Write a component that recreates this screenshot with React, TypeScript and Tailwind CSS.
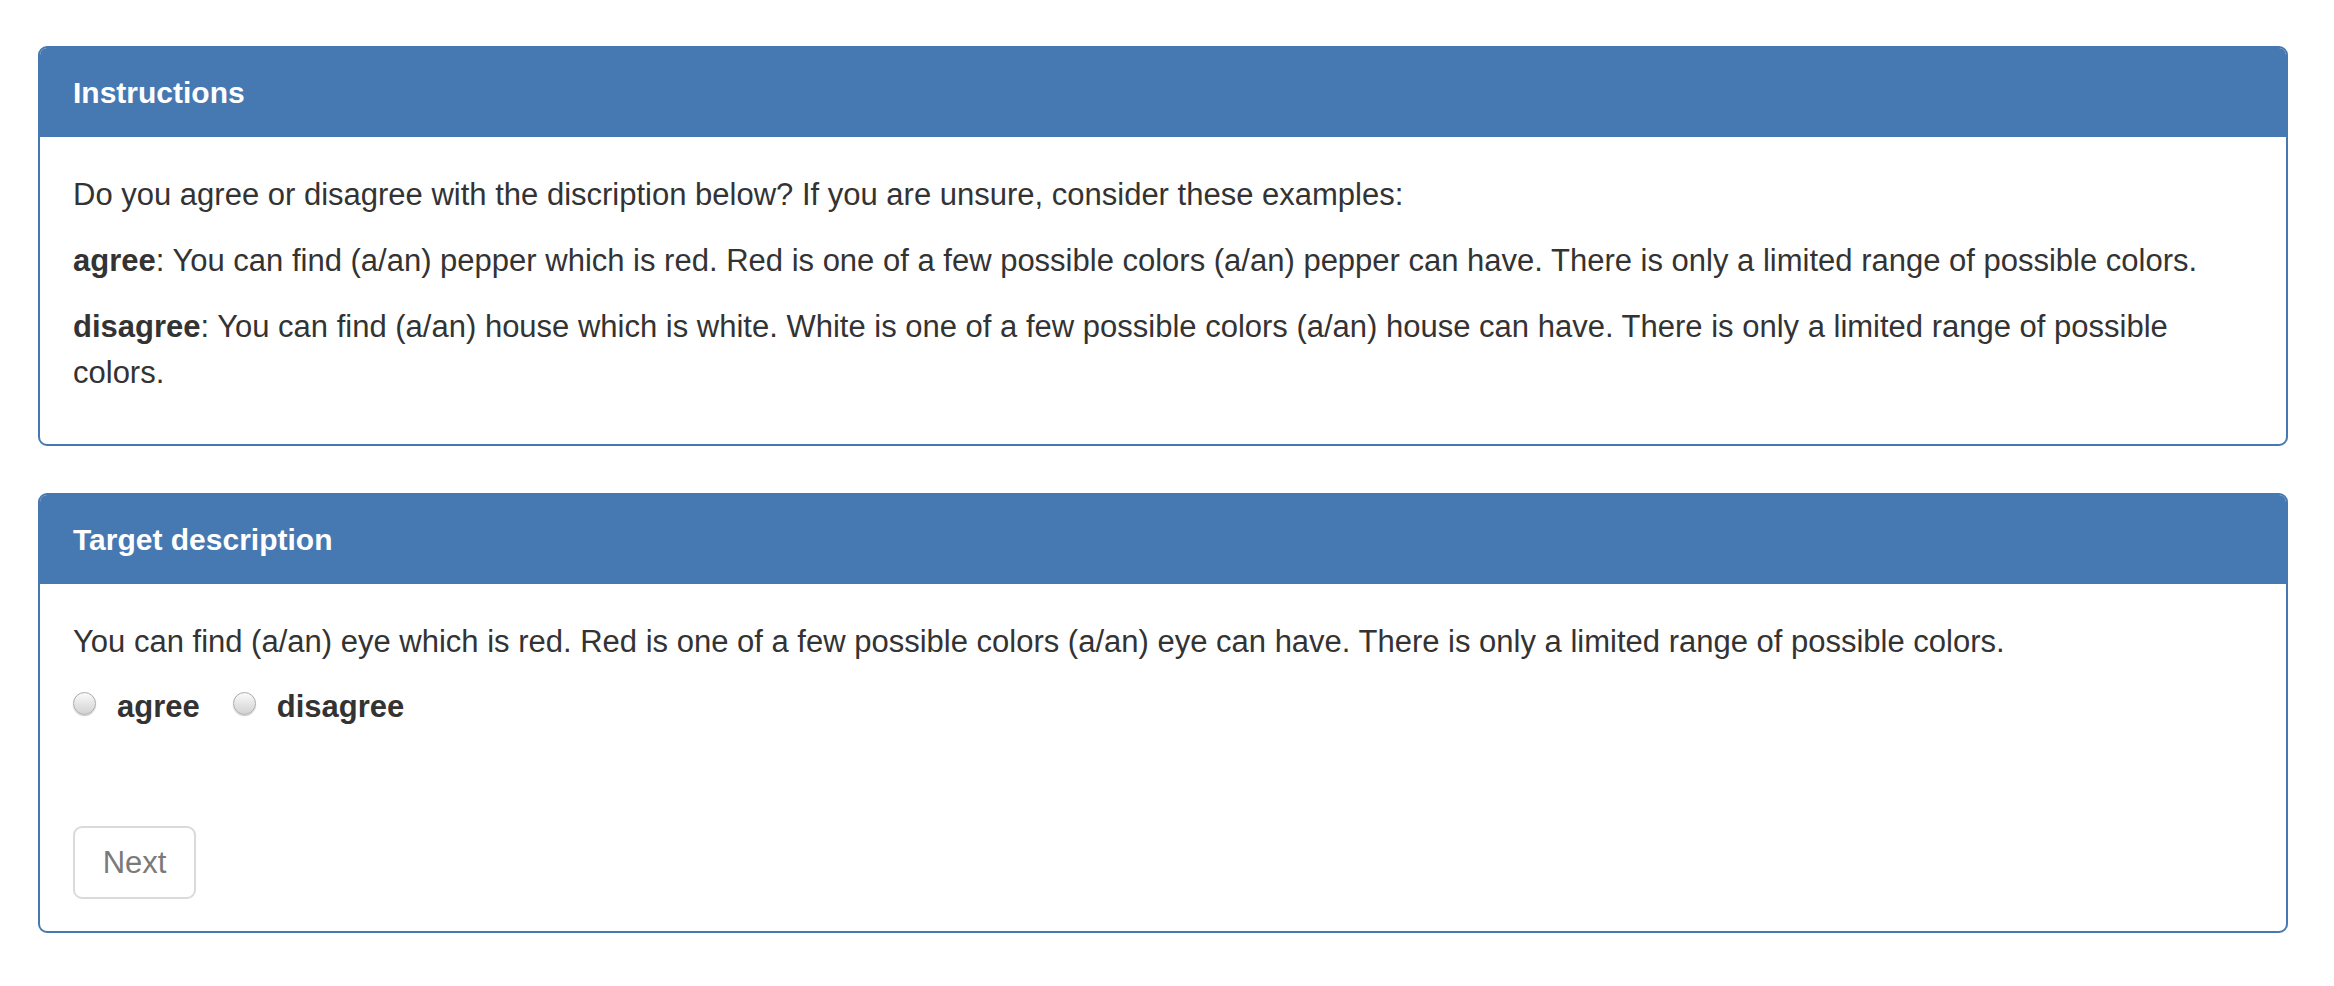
import React from 'react';

function Radio({ label }: { label: string }) {
  return (
    <label className="flex items-center cursor-pointer">
      {/* mac-style radio circle */}
      <span className="mb-[7px] h-[23px] w-[23px] rounded-full border border-[#ababab] bg-gradient-to-b from-[#fafafa] to-[#d2d2d2] shadow-[0_1px_1px_rgba(0,0,0,0.2)]" />
      <span className="ml-[21px] font-bold">{label}</span>
    </label>
  );
}

function Panel({ title, children, bodyClass }: { title: string; children: React.ReactNode; bodyClass: string }) {
  return (
    <section className="overflow-hidden rounded-[9px] border-2 border-[#4679b2] bg-white">
      <div className="flex h-[89px] items-center bg-[#4679b2] px-[33px] text-[30px] font-bold text-white">
        {title}
      </div>
      <div className={bodyClass}>{children}</div>
    </section>
  );
}

export default function App() {
  return (
    <div className="min-h-screen bg-white pt-[46px] pl-[38px] pr-[46px] font-['Liberation_Sans',Arial,sans-serif] text-[31px] leading-[46px] text-[#333]">
      <Panel title="Instructions" bodyClass="px-[33px] pt-[35px] pb-[28px]">
        <p className="mb-[20px]">
          Do you agree or disagree with the discription below? If you are unsure, consider these examples:
        </p>
        <p className="mb-[20px]">
          <b>agree</b>: You can find (a/an) pepper which is red. Red is one of a few possible colors (a/an) pepper can
          have. There is only a limited range of possible colors.
        </p>
        <p className="mb-[20px]">
          <b>disagree</b>: You can find (a/an) house which is white. White is one of a few possible colors (a/an) house
          can have. There is only a limited range of possible colors.
        </p>
      </Panel>

      <div className="mt-[47px]">
        <Panel title="Target description" bodyClass="px-[33px] pt-[35px] pb-[32px]">
          <p>
            You can find (a/an) eye which is red. Red is one of a few possible colors (a/an) eye can have. There is only
            a limited range of possible colors.
          </p>
          <div className="mt-[19px] flex items-center gap-[33px]">
            <Radio label="agree" />
            <Radio label="disagree" />
          </div>
          <button
            disabled
            className="mt-[96px] h-[73px] w-[123px] rounded-[9px] border-2 border-[#dadada] bg-white text-[31px] text-[#7a7a7a]"
          >
            Next
          </button>
        </Panel>
      </div>
    </div>
  );
}
